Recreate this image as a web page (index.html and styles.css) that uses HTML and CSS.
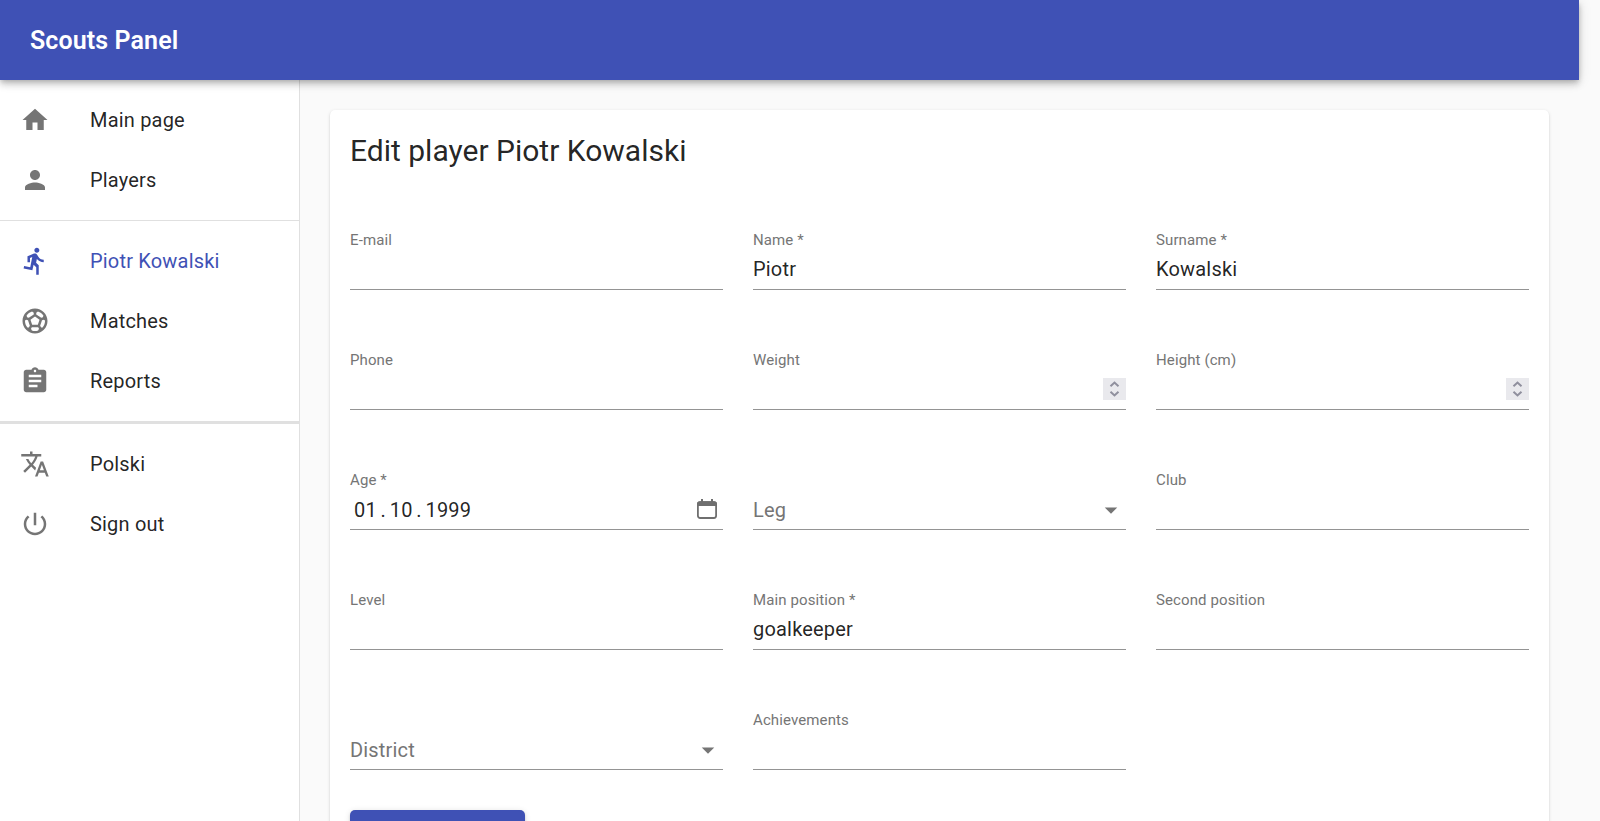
FILE: index.html
```html
<!DOCTYPE html>
<html lang="en">
<head>
<meta charset="utf-8">
<title>Scouts Panel</title>
<link rel="stylesheet" href="styles.css">
</head>
<body>
<header class="app-bar"><h1 class="app-title">Scouts Panel</h1></header>
<div class="layout">
  <nav class="sidebar">
    <div class="nav-list">
      <a class="nav-item"><svg class="icon" viewBox="0 0 24 24"><path d="M10 20v-6h4v6h5v-8h3L12 3 2 12h3v8z"/></svg><span>Main page</span></a>
      <a class="nav-item"><svg class="icon" viewBox="0 0 24 24"><path d="M12 12c2.21 0 4-1.79 4-4s-1.79-4-4-4-4 1.79-4 4 1.790 4 4 4zm0 2c-2.670 0-8 1.340-8 4v2h16v-2c0-2.660-5.330-4-8-4z"/></svg><span>Players</span></a>
    </div>
    <hr class="divider">
    <div class="nav-list">
      <a class="nav-item active"><svg class="icon" viewBox="0 0 24 24"><path d="M13.49 5.48c1.100 0 2-.9 2-2s-.9-2-2-2-2 .9-2 2 .9 2 2 2zm-3.600 13.900l1-4.400 2.100 2v6h2v-7.500l-2.100-2 .6-3c1.300 1.500 3.300 2.500 5.500 2.500v-2c-1.900 0-3.500-1-4.300-2.400l-1-1.600c-.4-.6-1-1-1.700-1-.3 0-.5.1-.8.1l-5.200 2.200v4.700h2v-3.400l1.800-.7-1.600 8.100-4.900-1-.4 2 7 1.400z"/></svg><span>Piotr Kowalski</span></a>
      <a class="nav-item"><svg class="icon" viewBox="0 0 24 24"><path d="M12 2C6.480 2 2 6.480 2 12s4.480 10 10 10 10-4.480 10-10S17.520 2 12 2zm1 3.300l1.350-.95c1.820.56 3.370 1.760 4.380 3.340l-.39 1.340-1.350.46L13 6.700V5.300zm-3.350-.95L11 5.300v1.400L7.010 9.490l-1.350-.46-.39-1.340c1.010-1.570 2.560-2.770 4.380-3.340zM7.080 17.110l-1.140.1C4.730 15.810 4 13.990 4 12c0-.12.01-.23.02-.35l1-.73 1.380.48 1.460 4.340-.78 1.370zm7.420 2.480c-.79.26-1.630.41-2.500.41s-1.710-.15-2.500-.41l-.69-1.490.64-1.100h5.110l.64 1.110-.7 1.480zM14.270 15H9.730l-1.350-4.020L12 8.440l3.630 2.540L14.270 15zm3.790 2.210l-1.140-.1-.79-1.370 1.460-4.340 1.390-.47 1 .73c.01.110.02.220.02.340 0 1.990-.73 3.810-1.940 5.210z"/></svg><span>Matches</span></a>
      <a class="nav-item"><svg class="icon" viewBox="0 0 24 24"><path d="M19 3h-4.180C14.400 1.840 13.300 1 12 1c-1.300 0-2.400.84-2.820 2H5c-1.100 0-2 .9-2 2v14c0 1.100.9 2 2 2h14c1.100 0 2-.9 2-2V5c0-1.100-.9-2-2-2zm-7 0c.55 0 1 .45 1 1s-.45 1-1 1-1-.45-1-1 .45-1 1-1zm2 14H7v-2h7v2zm3-4H7v-2h10v2zm0-4H7V7h10v2z"/></svg><span>Reports</span></a>
    </div>
    <hr class="divider thick">
    <div class="nav-list">
      <a class="nav-item"><svg class="icon" viewBox="0 0 24 24"><path d="M12.870 15.070l-2.540-2.510.03-.03c1.740-1.940 2.980-4.170 3.710-6.530H17V4h-7V2H8v2H1v1.990h11.170C11.500 7.920 10.440 9.750 9 11.350 8.070 10.320 7.300 9.190 6.690 8h-2c.73 1.630 1.730 3.170 2.980 4.560l-5.090 5.020L4 19l5-5 3.110 3.110.76-2.040zM18.500 10h-2L12 22h2l1.120-3h4.750L21 22h2l-4.500-12zm-2.620 7l1.620-4.330L19.120 17h-3.240z"/></svg><span>Polski</span></a>
      <a class="nav-item"><svg class="icon" viewBox="0 0 24 24"><path d="M13 3h-2v10h2V3zm4.830 2.170l-1.420 1.420C17.990 7.860 19 9.810 19 12c0 3.870-3.130 7-7 7s-7-3.130-7-7c0-2.190 1.010-4.140 2.580-5.420L6.170 5.170C4.230 6.820 3 9.260 3 12c0 4.970 4.030 9 9 9s9-4.030 9-9c0-2.740-1.230-5.180-3.170-6.830z"/></svg><span>Sign out</span></a>
    </div>
  </nav>
  <main class="content">
    <section class="card">
      <h2 class="card-title">Edit player Piotr Kowalski</h2>
      <div class="form-grid">
        <div class="field"><label class="label">E-mail</label><div class="control text"></div></div>
        <div class="field"><label class="label">Name *</label><div class="control text">Piotr</div></div>
        <div class="field"><label class="label">Surname *</label><div class="control text">Kowalski</div></div>

        <div class="field"><label class="label">Phone</label><div class="control text"></div></div>
        <div class="field"><label class="label">Weight</label><div class="control text"><svg class="spinner" viewBox="0 0 23 22"><path d="M7.500 8.200l4-3.700 4 3.700M7.500 13.800l4 3.700 4-3.700"/></svg></div></div>
        <div class="field"><label class="label">Height (cm)</label><div class="control text"><svg class="spinner" viewBox="0 0 23 22"><path d="M7.500 8.200l4-3.700 4 3.700M7.500 13.800l4 3.700 4-3.700"/></svg></div></div>

        <div class="field"><label class="label">Age *</label><div class="control"><span class="date"><span>01</span><span class="dot">.</span><span>10</span><span class="dot">.</span><span>1999</span></span><svg class="calendar" viewBox="0 0 20 20"><path class="calendar-top" d="M0 7V5C0 3.200 1.200 2.200 3 2.200h14c1.800 0 3 1 3 2.800v2zM4 0h2v3H4zM14 0h2v3h-2z"/><rect x="0.900" y="3.100" width="18.200" height="15.900" rx="2.200"/></svg></div></div>
        <div class="field"><label class="label"></label><div class="control placeholder">Leg<svg class="icon arrow" viewBox="0 0 24 24"><path d="M7 10l5 5 5-5z"/></svg></div></div>
        <div class="field"><label class="label">Club</label><div class="control text"></div></div>

        <div class="field"><label class="label">Level</label><div class="control text"></div></div>
        <div class="field"><label class="label">Main position *</label><div class="control text">goalkeeper</div></div>
        <div class="field"><label class="label">Second position</label><div class="control text"></div></div>

        <div class="field"><label class="label"></label><div class="control placeholder">District<svg class="icon arrow" viewBox="0 0 24 24"><path d="M7 10l5 5 5-5z"/></svg></div></div>
        <div class="field"><label class="label">Achievements</label><div class="control text"></div></div>
      </div>
      <button class="submit" type="button"></button>
    </section>
  </main>
</div>
</body>
</html>
```
FILE: styles.css
```css
* { box-sizing: border-box; }

html, body { height: 100%; margin: 0; overflow: hidden; }

body {
  background: #fafafa;
  color: rgba(0, 0, 0, 0.87);
  font-family: Roboto, "Liberation Sans", sans-serif;
  font-size: 20px;
  letter-spacing: 0.00938em;
}

.app-bar {
  position: relative;
  z-index: 2;
  display: flex;
  align-items: center;
  width: 1579px;
  height: 80px;
  padding: 2px 30px 0;
  background: #3f51b5;
  color: #fff;
  box-shadow: 0 2.5px 5px -1.25px rgba(0, 0, 0, 0.2), 0 5px 6.25px rgba(0, 0, 0, 0.14), 0 1.25px 12.5px rgba(0, 0, 0, 0.12);
}

.app-title {
  margin: 0;
  font-size: 25px;
  font-weight: 600;
  line-height: 40px;
  letter-spacing: 0.004em;
}

.layout { display: flex; width: 1579px; height: calc(100% - 80px); }

.sidebar {
  flex: 0 0 300px;
  background: #fff;
  border-right: 1px solid rgba(0, 0, 0, 0.12);
}

.nav-list { padding: 10px 0; }

.nav-item {
  display: flex;
  align-items: center;
  gap: 40px;
  height: 60px;
  padding: 0 20px;
}

.icon { width: 30px; height: 30px; fill: #757575; }
.active { color: #3f51b5; }
.active .icon { fill: #3f51b5; }

.divider { height: 1px; margin: 0; border: 0; background: #e0e0e0; }
.divider.thick { height: 3px; }

.content { flex: 1; height: 100%; padding: 30px 30px 0; overflow: hidden; }

.card {
  height: 900px;
  padding: 21px 20px 20px;
  border-radius: 5px;
  background: #fff;
  box-shadow: 0 2.5px 1.25px -1.25px rgba(0, 0, 0, 0.2), 0 1.25px 1.25px rgba(0, 0, 0, 0.14), 0 1.25px 3.75px rgba(0, 0, 0, 0.12);
}

.card-title {
  margin: 0 0 59px;
  font-size: 30px;
  font-weight: 400;
  line-height: 40px;
  letter-spacing: 0;
}

.form-grid {
  display: grid;
  grid-template-columns: repeat(3, 1fr);
  gap: 60px 30px;
}

.field { height: 60px; }

.label {
  display: block;
  height: 20px;
  color: #757575;
  font-size: 15px;
  line-height: 20px;
  letter-spacing: 0.0075em;
}

.control {
  display: flex;
  align-items: center;
  justify-content: space-between;
  height: 40px;
  border-bottom: 1px solid #949494;
}

.text { padding-bottom: 2px; }

.placeholder { color: #757575; }

.spinner {
  width: 23px;
  height: 22px;
  margin-left: auto;
  background: #e9e9ed;
  fill: none;
  stroke: #8f8f9d;
  stroke-width: 2;
}

.date { display: flex; padding-left: 4px; letter-spacing: 0.15px; }
.dot { width: 13px; text-align: center; }

.calendar {
  width: 20px;
  height: 20px;
  margin: 0 6px 1px 0;
  fill: none;
  stroke: #6f6f6f;
  stroke-width: 1.8;
}

.calendar-top { fill: #6f6f6f; stroke: none; }

.submit {
  display: block;
  width: 175px;
  height: 45px;
  margin-top: 40px;
  border: 0;
  border-radius: 5px;
  background: #3f51b5;
  box-shadow: 0 3.75px 1.25px -2.5px rgba(0, 0, 0, 0.2), 0 2.5px 2.5px rgba(0, 0, 0, 0.14), 0 1.25px 6.25px rgba(0, 0, 0, 0.12);
}
```
